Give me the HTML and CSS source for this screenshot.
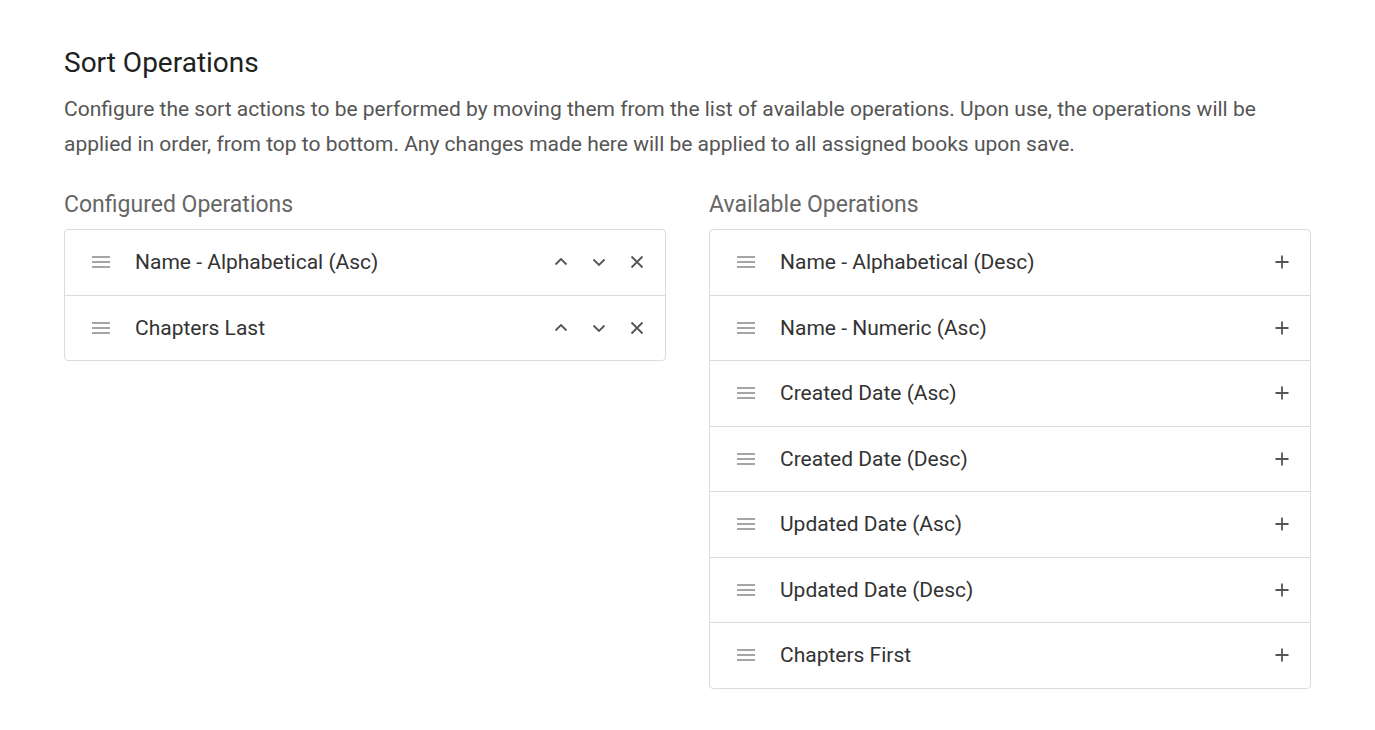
FILE: index.html
```html
<!DOCTYPE html>
<html>
<head>
<meta charset="utf-8">
<link rel="stylesheet" href="styles.css">
</head>
<body>
<div class="page">
  <h2 class="title">Sort Operations</h2>
  <p class="desc">Configure the sort actions to be performed by moving them from the list of available operations. Upon use, the operations will be applied in order, from top to bottom. Any changes made here will be applied to all assigned books upon save.</p>
  <div class="cols">
    <div class="col">
      <div class="label">Configured Operations</div>
      <div class="list">
        <div class="row">
          <svg class="drag" viewBox="0 0 18 12"><path d="M0 1h18M0 6h18M0 11h18"/></svg>
          <span class="name">Name - Alphabetical (Asc)</span>
          <div class="acts">
            <svg class="ic" viewBox="0 0 14 14"><path d="M1.5 9.5l5.5-5.5 5.5 5.5"/></svg>
            <svg class="ic" viewBox="0 0 14 14"><path d="M1.5 4.5l5.5 5.5 5.5-5.5"/></svg>
            <svg class="ic" viewBox="0 0 14 14"><path d="M1.5 1.5l11 11M12.5 1.5l-11 11"/></svg>
          </div>
        </div>
        <div class="row">
          <svg class="drag" viewBox="0 0 18 12"><path d="M0 1h18M0 6h18M0 11h18"/></svg>
          <span class="name">Chapters Last</span>
          <div class="acts">
            <svg class="ic" viewBox="0 0 14 14"><path d="M1.5 9.5l5.5-5.5 5.5 5.5"/></svg>
            <svg class="ic" viewBox="0 0 14 14"><path d="M1.5 4.5l5.5 5.5 5.5-5.5"/></svg>
            <svg class="ic" viewBox="0 0 14 14"><path d="M1.5 1.5l11 11M12.5 1.5l-11 11"/></svg>
          </div>
        </div>
      </div>
    </div>
    <div class="col">
      <div class="label">Available Operations</div>
      <div class="list">
        <div class="row"><svg class="drag" viewBox="0 0 18 12"><path d="M0 1h18M0 6h18M0 11h18"/></svg><span class="name">Name - Alphabetical (Desc)</span><div class="acts"><svg class="ic" viewBox="0 0 14 14"><path d="M7 0.5v13M0.5 7h13"/></svg></div></div>
        <div class="row"><svg class="drag" viewBox="0 0 18 12"><path d="M0 1h18M0 6h18M0 11h18"/></svg><span class="name">Name - Numeric (Asc)</span><div class="acts"><svg class="ic" viewBox="0 0 14 14"><path d="M7 0.5v13M0.5 7h13"/></svg></div></div>
        <div class="row"><svg class="drag" viewBox="0 0 18 12"><path d="M0 1h18M0 6h18M0 11h18"/></svg><span class="name">Created Date (Asc)</span><div class="acts"><svg class="ic" viewBox="0 0 14 14"><path d="M7 0.5v13M0.5 7h13"/></svg></div></div>
        <div class="row"><svg class="drag" viewBox="0 0 18 12"><path d="M0 1h18M0 6h18M0 11h18"/></svg><span class="name">Created Date (Desc)</span><div class="acts"><svg class="ic" viewBox="0 0 14 14"><path d="M7 0.5v13M0.5 7h13"/></svg></div></div>
        <div class="row"><svg class="drag" viewBox="0 0 18 12"><path d="M0 1h18M0 6h18M0 11h18"/></svg><span class="name">Updated Date (Asc)</span><div class="acts"><svg class="ic" viewBox="0 0 14 14"><path d="M7 0.5v13M0.5 7h13"/></svg></div></div>
        <div class="row"><svg class="drag" viewBox="0 0 18 12"><path d="M0 1h18M0 6h18M0 11h18"/></svg><span class="name">Updated Date (Desc)</span><div class="acts"><svg class="ic" viewBox="0 0 14 14"><path d="M7 0.5v13M0.5 7h13"/></svg></div></div>
        <div class="row"><svg class="drag" viewBox="0 0 18 12"><path d="M0 1h18M0 6h18M0 11h18"/></svg><span class="name">Chapters First</span><div class="acts"><svg class="ic" viewBox="0 0 14 14"><path d="M7 0.5v13M0.5 7h13"/></svg></div></div>
      </div>
    </div>
  </div>
</div>
</body>
</html>
```
FILE: styles.css
```css
html, body { margin: 0; padding: 0; background: #fff; }
body { font-family: Roboto, "Liberation Sans", sans-serif; }
.page { padding: 46px 64px 0 64px; width: 1247px; }
.title { margin: 0; font-size: 28px; font-weight: 400; color: #212121; line-height: 34px; }
.desc { margin: 12px 0 0 0; font-size: 21px; line-height: 35px; color: #555; }
.cols { display: flex; gap: 43px; margin-top: 29px; }
.col { flex: 1; }
.label { font-size: 23px; color: #666; line-height: 28px; margin-bottom: 10px; }
.list { border: 1px solid #dcdcdc; border-radius: 4px; }
.row { display: flex; align-items: center; height: 64.5px; border-top: 1px solid #dcdcdc; padding: 0 21px 0 27px; }
.row:first-child { border-top: none; }
.drag { width: 18px; height: 12px; stroke: #888; stroke-width: 1.5; fill: none; flex: none; }
.name { margin-left: 25px; font-size: 21px; color: #333; flex: 1; }
.acts { display: flex; gap: 24px; align-items: center; }
.ic { width: 14px; height: 14px; stroke: #555; stroke-width: 1.8; fill: none; flex: none; }
```
